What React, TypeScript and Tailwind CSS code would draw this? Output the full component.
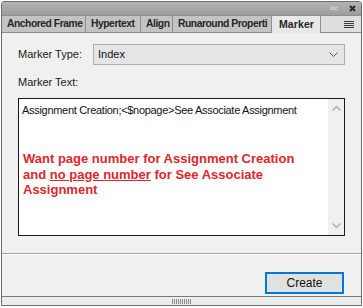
import React from "react";

const tabs = [
  { label: "Anchored Frame", w: "w-[84px]" },
  { label: "Hypertext", w: "w-[55px]" },
  { label: "Align", w: "w-[32px]" },
  { label: "Runaround Properti", w: "w-[99px]" },
];

export default function App() {
  return (
    <div className="w-[363px] h-[308px] bg-white pt-px" style={{ fontFamily: '"Liberation Sans", Arial, sans-serif' }}>
      <div className="w-[361px] h-[305px] ml-px border border-[#6e6e6e] rounded-tl-[3px] rounded-tr-[3px] flex flex-col bg-[#f0f0f0] overflow-hidden">
        {/* title bar */}
        <div className="h-[13px] bg-gradient-to-b from-[#b3b3b3] to-[#9d9d9d] flex items-center justify-end pr-[5px] gap-[12px]">
          <span className="text-[8px] leading-none text-[#d8d8d8] tracking-[-1px] font-bold">&lt;&lt;</span>
          <svg width="7" height="7" viewBox="0 0 7 7">
            <path d="M1 1L6 6M6 1L1 6" stroke="#2a2a2a" strokeWidth="2" />
          </svg>
        </div>
        {/* tab row */}
        <div className="h-[18px] flex bg-[#c3c3c3] border-b border-[#8a8a8a] border-t border-t-[#8e8e8e]">
          {tabs.map((t) => (
            <div
              key={t.label}
              className={`${t.w} h-full flex items-center pl-[5px] border-r border-[#8e8e8e] text-[10.3px] tracking-[-0.45px] font-bold text-[#262626] whitespace-nowrap overflow-hidden`}
            >
              {t.label}
            </div>
          ))}
          <div className="w-[49px] h-[calc(100%+1px)] flex items-center pl-[7px] bg-[#e8e8e8] border-r border-[#8e8e8e] text-[10.5px] tracking-[0.1px] font-bold text-[#262626]">
            Marker
          </div>
          <div className="flex-1 h-full bg-[#dedede] flex items-center justify-end pr-[7px]">
            <svg width="10" height="7" viewBox="0 0 10 7">
              <path d="M0 0.5H10M0 2.5H10M0 4.5H10M0 6.5H10" stroke="#3a3a3a" strokeWidth="1" />
            </svg>
          </div>
        </div>
        {/* content */}
        <div className="flex-1 flex flex-col">
          <div className="flex items-center pl-[16px] pr-[16px] pt-[11px]">
            <span className="w-[75px] text-[11px] text-[#1a1a1a]">Marker Type:</span>
            <div className="flex-1 h-[21px] border border-[#adadad] bg-[#e5e5e5] flex items-center justify-between pl-[4px] pr-[6px]">
              <span className="text-[11px] text-[#111]">Index</span>
              <svg width="9" height="5" viewBox="0 0 9 5">
                <path d="M0.5 0.5L4.5 4.5L8.5 0.5" stroke="#555" strokeWidth="1" fill="none" />
              </svg>
            </div>
          </div>
          <div className="pl-[16px] mt-[10px] text-[11px] text-[#1a1a1a] leading-[14px]">Marker Text:</div>
          <div className="mx-[16px] mt-[9px] h-[138px] border border-[#1a1a1a] bg-white flex">
            <div className="flex-1 pl-[3px] pt-[3px]">
              <div className="text-[11px] text-[#111] leading-[16px] tracking-[-0.3px] whitespace-nowrap">
                Assignment Creation;&lt;$nopage&gt;See Associate Assignment
              </div>
              <div className="mt-[33px] pl-[1px] text-[13px] font-bold text-[#e0262b] leading-[15.5px]">
                Want page number for Assignment Creation
                <br />
                and <span className="underline">no page number</span> for See Associate
                <br />
                Assignment
              </div>
            </div>
            <div className="w-[16px] bg-[#f0f0f0] flex flex-col items-center justify-between py-[7px]">
              <svg width="9" height="5" viewBox="0 0 9 5">
                <path d="M0.5 4.5L4.5 0.5L8.5 4.5" stroke="#b0b0b0" strokeWidth="1.5" fill="none" />
              </svg>
              <svg width="9" height="5" viewBox="0 0 9 5">
                <path d="M0.5 0.5L4.5 4.5L8.5 0.5" stroke="#b0b0b0" strokeWidth="1.5" fill="none" />
              </svg>
            </div>
          </div>
          <div className="mt-[17px] border-t border-[#a0a0a0] border-b border-b-white" />
          <div className="flex justify-end pr-[17px] mt-[17px]">
            <div className="w-[79px] h-[22px] border-2 border-[#0078d7] bg-[#e1e1e1] flex items-center justify-center text-[12px] text-[#111]">
              Create
            </div>
          </div>
        </div>
        {/* bottom gripper */}
        <div className="h-[9px] border-t border-[#7a7a7a] bg-[#ececec] flex items-center justify-center">
          <svg width="20" height="5" viewBox="0 0 20 5">
            {Array.from({ length: 10 }).map((_, i) => (
              <rect key={i} x={i * 2} y={0} width={1} height={5} fill="#8a8a8a" />
            ))}
          </svg>
        </div>
      </div>
    </div>
  );
}
